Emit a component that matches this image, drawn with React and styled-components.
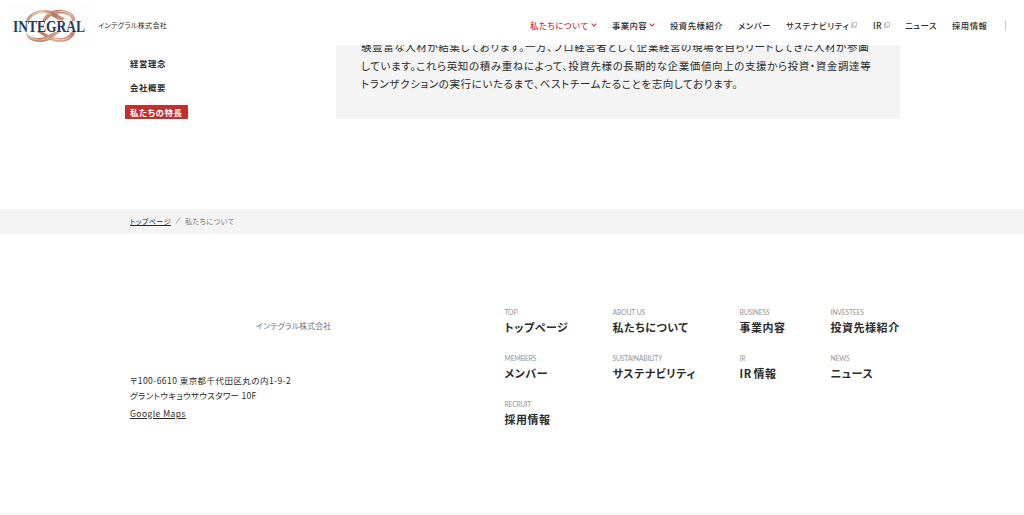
import React from 'react';
import styled, { createGlobalStyle } from 'styled-components';

const colors = {
  text: '#2b2b2b',
  red: '#c1302f',
  navActive: '#d0393d',
  grey: '#f4f4f4',
  muted: '#959595',
};

const GlobalStyle = createGlobalStyle`
  * {
    box-sizing: border-box;
  }
  body {
    margin: 0;
    background-color: #fff;
    color: ${colors.text};
    font-family: "Noto Sans CJK JP", "Noto Sans", sans-serif;
    font-feature-settings: "palt";
    overflow: hidden;
  }
  a {
    color: inherit;
    text-decoration: none;
  }
`;

const Page = styled.div`
  width: 1024px;
  height: 515px;
  overflow: hidden;
`;
const Header = styled.header`
  height: 45px;
  padding: 4px 18px 0 8px;
  display: flex;
  align-items: flex-start;
  background-color: #fff;
  position: relative;
  z-index: 1;
`;
const LogoSvg = styled.svg`
  width: 82px;
  height: 42px;
  flex: none;
`;
const LogoText = styled.text`
  font-family: "Liberation Serif", serif;
  font-weight: 700;
  font-size: 16.4px;
  fill: #203a60;
`;
const Company = styled.span`
  margin: 14px 0 0 8px;
  font-size: 7.1px;
  line-height: 14px;
  letter-spacing: 0.25px;
  white-space: nowrap;
`;
const Nav = styled.nav`
  margin: 14px 0 0 auto;
  height: 14px;
  display: flex;
  align-items: center;
`;
const NavItem = styled.a`
  width: ${p => p.$width}px;
  display: flex;
  align-items: center;
  flex: none;
  font-size: 8.4px;
  font-weight: 500;
  line-height: 14px;
  letter-spacing: ${p => p.$spacing || 0.4}px;
  white-space: nowrap;
  color: ${p => (p.$active ? colors.navActive : colors.text)};
  svg {
    margin-left: 2px;
    flex: none;
  }
`;
const Divider = styled.span`
  width: 1px;
  height: 10px;
  background-color: #ccc;
`;

const Main = styled.main`
  height: 164px;
  padding: 0 124px 0 125px;
  display: flex;
  justify-content: space-between;
  align-items: flex-start;
`;
const SideMenu = styled.div`
  padding-top: 11px;
  display: flex;
  flex-direction: column;
  align-items: flex-start;
  gap: 10.3px;
`;
const SideLink = styled.a`
  height: 14px;
  padding: 0 5px;
  font-size: 8.4px;
  font-weight: 700;
  line-height: 14px;
  letter-spacing: 0.65px;
  border-radius: 1px;
  white-space: nowrap;
  color: ${p => (p.$active ? '#fff' : colors.text)};
  background-color: ${p => (p.$active ? colors.red : 'transparent')};
`;
const Panel = styled.div`
  width: 564px;
  height: 74px;
  padding-left: 25px;
  overflow: hidden;
  border-radius: 0 0 2px 2px;
  background-color: ${colors.grey};
`;
const Lines = styled.div`
  margin-top: -7px;
`;
const Line = styled.p`
  margin: 0;
  height: 18.5px;
  font-size: 10.5px;
  line-height: 18.5px;
  letter-spacing: 0.61px;
  white-space: nowrap;
`;

const Breadcrumb = styled.div`
  height: 25px;
  padding: 0 0 2px 130px;
  display: flex;
  align-items: center;
  background-color: ${colors.grey};
  font-size: 7.1px;
  line-height: 10px;
  letter-spacing: 0.4px;
  color: #777;
`;
const Crumb = styled.a`
  color: ${colors.text};
  text-decoration: underline;
  text-underline-offset: 1px;
`;
const Slash = styled.svg`
  width: 14px;
  height: 7px;
`;

const Footer = styled.footer`
  height: 280px;
  padding-left: 130px;
  display: flex;
  border-bottom: 1px solid #eee;
`;
const FooterInfo = styled.div`
  width: 374.5px;
  padding-top: 85px;
`;
const FooterCompany = styled.div`
  padding-left: 126px;
  font-size: 7.8px;
  line-height: 14px;
  letter-spacing: 0.22px;
  color: #6b7480;
`;
const Address = styled.div`
  margin-top: 40px;
  font-size: 8.5px;
  line-height: 15.4px;
  letter-spacing: ${p => p.$spacing || 0.45}px;
`;
const Building = styled.span`
  letter-spacing: 0.28px;
`;
const MapLink = styled.a`
  margin-top: 2px;
  display: inline-block;
  text-decoration: underline;
  text-underline-offset: 1px;
`;
const FooterNav = styled.div`
  padding-top: 73px;
  display: grid;
  grid-template-columns: 108px 127px 91px 80px;
  grid-auto-rows: 46px;
  align-content: start;
`;
const FooterLink = styled.a`
  display: block;
  font-size: 11px;
  font-weight: 700;
  line-height: 18px;
  letter-spacing: 0.53px;
  word-spacing: -1.2px;
  white-space: nowrap;
  small {
    display: block;
    font-family: Lato, sans-serif;
    font-size: 6.8px;
    font-weight: 400;
    line-height: 11px;
    letter-spacing: -0.18px;
    word-spacing: 0.4px;
    color: ${colors.muted};
  }
`;

const Logo = () => (
  <LogoSvg viewBox="0 0 82 42">
    <defs>
      <linearGradient id="copper" gradientUnits="userSpaceOnUse" x1="18" x2="68" y1="6" y2="36">
        <stop offset="0" stopColor="#c08468" />
        <stop offset="0.25" stopColor="#e0b49c" />
        <stop offset="0.45" stopColor="#b5785d" />
        <stop offset="0.7" stopColor="#ddae95" />
        <stop offset="1" stopColor="#b0745a" />
      </linearGradient>
    </defs>
    <rect width="82" height="42" fill="#fdfdfd" />
    <g fill="url(#copper)">
      <path d="M18 17C20 10 27 6 37 6C46 6 50 12 57 14L54 17C46 15 43 10 36 9C28 9 23 12 21 17Z" />
      <path d="M34 17C37 10 45 5 54 6C63 7 68 11 67 17H64C63 12 59 10 53 9.500C46 9 41 12 38 17Z" />
      <path d="M18 28C20 32 25 34 31 34C39 34 42 29 47 28H52C47 31 44 37 34 38C24 38 18 35 18 28Z" />
      <path d="M29 28H34C40 30 43 34 51 34C57 34 61 32 63 28H67C66 34 60 38 51 38C41 38 36 31 29 28Z" />
    </g>
    <g fill="none" stroke="#f6e3d9" strokeWidth="0.7">
      <path d="M24 11C30 7 37 7 43 11" />
      <path d="M46 8.500C53 6 60 8 63 11" />
      <path d="M22 33C28 37 35 37 41 33" />
      <path d="M44 34C50 37 58 36 62 33" />
    </g>
    <LogoText x="5" y="27.5" textLength="72" lengthAdjust="spacingAndGlyphs">INTEGRAL</LogoText>
  </LogoSvg>
);

const Chevron = () => (
  <svg width="6" height="4" viewBox="0 0 6 4" fill="none" stroke={colors.navActive} strokeWidth="1.1">
    <path d="M0.6 0.6L3 3L5.4 0.6" />
  </svg>
);

const External = () => (
  <svg width="6" height="6" viewBox="0 0 6 6" fill="none" stroke="#999" strokeWidth="0.6">
    <path d="M1.7 0.5H5.5V4.1H1.7Z" />
    <path d="M1.7 1.7H0.5V5.4H4.3V4.1" />
  </svg>
);

const navItems = [
  { title: '私たちについて', width: 82, icon: <Chevron />, active: true, spacing: 0.5 },
  { title: '事業内容', width: 58, icon: <Chevron /> },
  { title: '投資先様紹介', width: 68, spacing: 0.5 },
  { title: 'メンバー', width: 48, spacing: 0.5 },
  { title: 'サステナビリティ', width: 87, icon: <External />, spacing: 0.55 },
  { title: 'IR', width: 32, icon: <External /> },
  { title: 'ニュース', width: 47 },
  { title: '採用情報', width: 53, spacing: 0.5 },
];

const footerItems = [
  { label: 'TOP', title: 'トップページ' },
  { label: 'ABOUT US', title: '私たちについて' },
  { label: 'BUSINESS', title: '事業内容' },
  { label: 'INVESTEES', title: '投資先様紹介' },
  { label: 'MEMBERS', title: 'メンバー' },
  { label: 'SUSTAINABILITY', title: 'サステナビリティ' },
  { label: 'IR', title: 'IR 情報' },
  { label: 'NEWS', title: 'ニュース' },
  { label: 'RECRUIT', title: '採用情報' },
];

function App() {
  return (
    <Page>
      <GlobalStyle />
      <Header>
        <Logo />
        <Company>インテグラル株式会社</Company>
        <Nav>
          {navItems.map(item => (
            <NavItem key={item.title} href="#" $width={item.width} $active={item.active} $spacing={item.spacing}>
              {item.title}
              {item.icon}
            </NavItem>
          ))}
          <Divider />
        </Nav>
      </Header>
      <Main>
        <SideMenu>
          <SideLink href="#">経営理念</SideLink>
          <SideLink href="#">会社概要</SideLink>
          <SideLink href="#" $active>私たちの特長</SideLink>
        </SideMenu>
        <Panel>
          <Lines>
            <Line>験豊富な人材が結集しております。一方、プロ経営者として企業経営の現場を自らリードしてきた人材が参画</Line>
            <Line>しています。これら英知の積み重ねによって、投資先様の長期的な企業価値向上の支援から投資・資金調達等</Line>
            <Line>トランザクションの実行にいたるまで、ベストチームたることを志向しております。</Line>
          </Lines>
        </Panel>
      </Main>
      <Breadcrumb>
        <Crumb href="#">トップページ</Crumb>
        <Slash viewBox="0 0 14 7" stroke="#888" strokeWidth="0.7">
          <path d="M5 6.500L9 0.500" />
        </Slash>
        <span>私たちについて</span>
      </Breadcrumb>
      <Footer>
        <FooterInfo>
          <FooterCompany>インテグラル株式会社</FooterCompany>
          <Address>
            〒100-6610 東京都千代田区丸の内1-9-2<br />
            <Building>グラントウキョウサウスタワー 10F</Building><br />
            <MapLink href="#">Google Maps</MapLink>
          </Address>
        </FooterInfo>
        <FooterNav>
          {footerItems.map(item => (
            <FooterLink key={item.label} href="#">
              <small>{item.label}</small>
              {item.title}
            </FooterLink>
          ))}
        </FooterNav>
      </Footer>
    </Page>
  );
}

export default App;
